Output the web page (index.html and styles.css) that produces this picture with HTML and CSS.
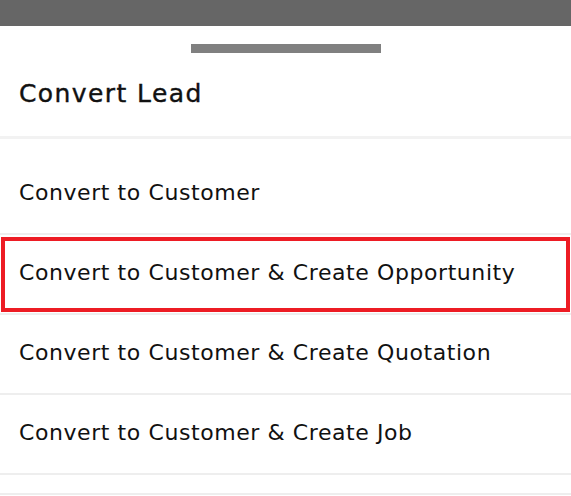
FILE: index.html
```html
<!DOCTYPE html>
<html lang="en">
<head>
<meta charset="utf-8">
<title>Convert Lead</title>
<link rel="stylesheet" href="styles.css">
</head>
<body>
<div class="statusbar"></div>
<div class="sheet">
  <div class="handle-wrap"><div class="handle"></div></div>
  <div class="header"><h1 class="title">Convert Lead</h1></div>
  <ul class="list">
    <li class="row">Convert to Customer</li>
    <li class="row selected">Convert to Customer &amp; Create Opportunity</li>
    <li class="row">Convert to Customer &amp; Create Quotation</li>
    <li class="row">Convert to Customer &amp; Create Job</li>
    <li class="row-end"></li>
  </ul>
</div>
</body>
</html>
```
FILE: styles.css
```css
html, body {
  margin: 0;
  padding: 0;
  background: #ffffff;
}
body {
  font-family: "DejaVu Sans", "Liberation Sans", sans-serif;
  color: #111111;
  overflow: hidden;
}
.statusbar {
  height: 26px;
  background: #666666;
}
.sheet {
  background: #ffffff;
}
.handle-wrap {
  display: flex;
  justify-content: center;
  padding-top: 18px;
}
.handle {
  width: 190px;
  height: 9px;
  background: #808080;
}
.header {
  height: 86px;
  border-bottom: 3px solid #f2f2f2;
  display: flex;
  align-items: center;
  padding-left: 19px;
  padding-bottom: 2px;
  box-sizing: border-box;
}
.title {
  margin: 0;
  font-size: 25px;
  font-weight: 400;
  line-height: 1;
  letter-spacing: 1.4px;
  -webkit-text-stroke: 0.4px #111111;
}
.list {
  list-style: none;
  margin: 16px 0 0 0;
  padding: 0;
}
.row {
  position: relative;
  height: 76px;
  border-bottom: 2px solid #eeeeee;
  display: flex;
  align-items: center;
  padding-left: 19px;
  padding-bottom: 2px;
  box-sizing: content-box;
  font-size: 22px;
  line-height: 1;
  letter-spacing: 0.58px;
}
.selected::after {
  content: "";
  position: absolute;
  top: 2px;
  bottom: 1px;
  left: 1px;
  right: 1px;
  border: 4px solid #ed1c24;
}
.row-end {
  height: 18px;
  border-bottom: 2px solid #eeeeee;
}
```
